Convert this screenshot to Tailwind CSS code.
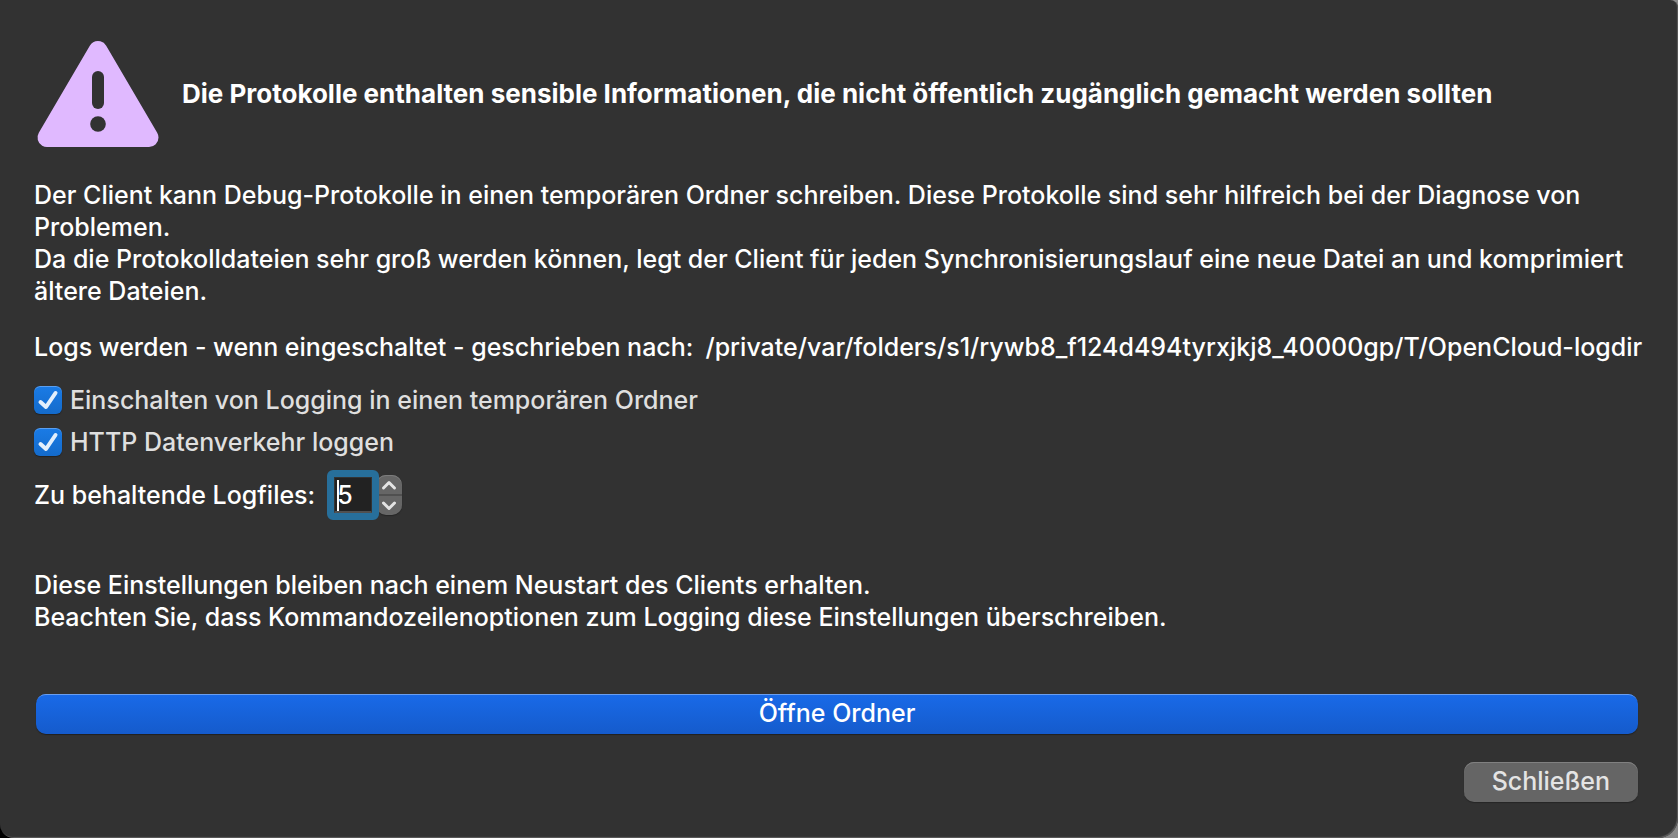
<!DOCTYPE html>
<html lang="de">
<head>
<meta charset="utf-8">
<meta name="viewport" content="width=device-width, initial-scale=1">
<title>Protokolleinstellungen</title>
<script src="https://cdn.jsdelivr.net/npm/@tailwindcss/browser@4"></script>
</head>
<body class="bg-linear-to-r from-black to-[#8a8a8a] font-['Inter',sans-serif] text-[25px] leading-8 font-medium text-white">
<main class="flex min-h-screen flex-col rounded-tr-lg rounded-br-[20px] rounded-bl-[14px] bg-[#323232] px-[34px] pt-[34px] pb-9 shadow-[inset_-1px_-1px_1px_#5c5c5c]">
  <header class="flex items-center gap-5">
    <svg class="h-[120px] w-[128px] shrink-0" viewBox="0 0 128 120" aria-hidden="true">
      <path d="M64 16.500L13 103.500H115Z" fill="#e0b9ff" stroke="#e0b9ff" stroke-width="19" stroke-linejoin="round"/>
      <rect x="58" y="37" width="12" height="38" rx="6" fill="#323232"/>
      <circle cx="64" cy="90" r="7.800" fill="#323232"/>
    </svg>
    <h1 class="text-[26px] font-bold">Die Protokolle enthalten sensible Informationen, die nicht öffentlich zugänglich gemacht werden sollten</h1>
  </header>

  <p class="mt-[25px]">Der Client kann Debug-Protokolle in einen temporären Ordner schreiben. Diese Protokolle sind sehr hilfreich bei der Diagnose von Problemen.<br>Da die Protokolldateien sehr groß werden können, legt der Client für jeden Synchronisierungslauf eine neue Datei an und komprimiert ältere Dateien.</p>

  <div class="mt-6 flex gap-3 whitespace-nowrap">
    <span>Logs werden - wenn eingeschaltet - geschrieben nach:</span>
    <span>/private/var/folders/s1/rywb8_f124d494tyrxjkj8_40000gp/T/OpenCloud-logdir</span>
  </div>

  <div class="mt-[21px] flex flex-col items-start gap-[10px] text-[#dfdfdf]">
    <label class="flex items-center gap-2">
      <span class="relative h-7 w-7">
        <input type="checkbox" checked class="peer block h-7 w-7 appearance-none rounded-md bg-[#4a4a4a] shadow-[0_1px_1px_#222,inset_0_1px_0_#5a9ff0] checked:bg-linear-to-b checked:from-[#1a7be6] checked:to-[#146bcb]">
        <svg class="pointer-events-none absolute inset-0 hidden h-7 w-7 peer-checked:block" viewBox="0 0 28 28" fill="none" stroke="#e3effc" stroke-width="4" stroke-linecap="round" stroke-linejoin="round" aria-hidden="true"><path d="M6.500 16L12 21L21.500 7"/></svg>
      </span>
      <span>Einschalten von Logging in einen temporären Ordner</span>
    </label>
    <label class="flex items-center gap-2">
      <span class="relative h-7 w-7">
        <input type="checkbox" checked class="peer block h-7 w-7 appearance-none rounded-md bg-[#4a4a4a] shadow-[0_1px_1px_#222,inset_0_1px_0_#5a9ff0] checked:bg-linear-to-b checked:from-[#1a7be6] checked:to-[#146bcb]">
        <svg class="pointer-events-none absolute inset-0 hidden h-7 w-7 peer-checked:block" viewBox="0 0 28 28" fill="none" stroke="#e3effc" stroke-width="4" stroke-linecap="round" stroke-linejoin="round" aria-hidden="true"><path d="M6.500 16L12 21L21.500 7"/></svg>
      </span>
      <span>HTTP Datenverkehr loggen</span>
    </label>
  </div>

  <div class="mt-3 flex items-center">
    <label for="logfiles">Zu behaltende Logfiles:</label>
    <div class="relative z-10 ml-3 h-[50px] w-[52px] rounded-md border-[7px] border-[#276f9b]">
      <input id="logfiles" type="text" inputmode="numeric" value="5" class="block h-full w-full border border-b-2 border-[#333] border-b-[#505050] bg-[#222] pl-[2px] outline-none">
      <span class="absolute top-[3px] left-[3px] h-[31px] w-[2px] bg-white" aria-hidden="true"></span>
    </div>
    <div class="-ml-[3px] flex h-10 w-[26px] flex-col overflow-hidden rounded-[10px] bg-[#666] shadow-[0_1px_1px_#252525,inset_0_1px_0_#7c7c7c]">
      <button type="button" aria-label="Mehr" class="flex flex-1 items-center justify-center border-b-2 border-[#505050]">
        <svg class="h-3 w-4" viewBox="0 0 16 12" fill="none" stroke="#e4e4e4" stroke-width="3" stroke-linecap="round" stroke-linejoin="round" aria-hidden="true"><path d="M2.500 9L8 3.500L13.500 9"/></svg>
      </button>
      <button type="button" aria-label="Weniger" class="flex flex-1 items-center justify-center">
        <svg class="h-3 w-4" viewBox="0 0 16 12" fill="none" stroke="#e4e4e4" stroke-width="3" stroke-linecap="round" stroke-linejoin="round" aria-hidden="true"><path d="M2.500 3L8 8.500L13.500 3"/></svg>
      </button>
    </div>
  </div>

  <p class="mt-[49px]">Diese Einstellungen bleiben nach einem Neustart des Clients erhalten.<br>Beachten Sie, dass Kommandozeilenoptionen zum Logging diese Einstellungen überschreiben.</p>

  <div class="mt-auto flex flex-col items-end gap-7 pr-[6px] pl-[2px]">
    <button type="button" class="h-10 w-full rounded-[10px] bg-linear-to-b from-[#196ae8] to-[#155bcc] pb-[2px] shadow-[0_1px_1px_#202020,inset_0_2px_0_-1px_#6a9eef]">Öffne Ordner</button>
    <button type="button" class="h-10 rounded-[10px] bg-[#656565] px-7 pb-[2px] text-[#e4e4e4] shadow-[0_1px_1px_#252525,inset_0_1px_0_#808080]">Schließen</button>
  </div>
</main>
</body>
</html>
